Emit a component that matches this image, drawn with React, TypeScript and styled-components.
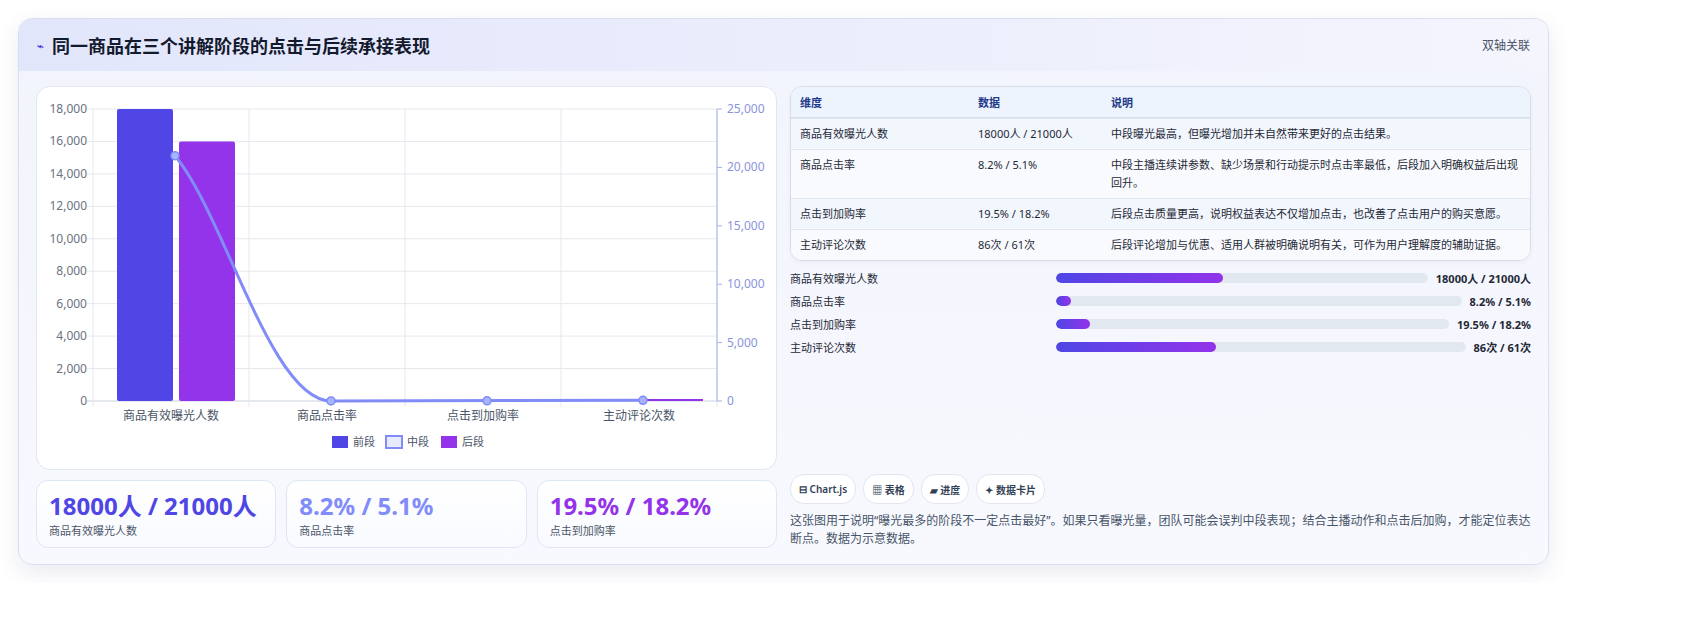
import React from "react";
import styled, { createGlobalStyle } from "styled-components";

const Global = createGlobalStyle`
  body { margin: 0; background: #fff; font-family: "Noto Sans", "Noto Sans CJK SC", sans-serif; }
`;

const Page = styled.div`
  padding: 18px 147px 18px 18px;
`;
const Card = styled.div`
  border: 1px solid #d9def0;
  border-radius: 14px;
  background: linear-gradient(180deg, #f2f4fd 0%, #f8f9fe 100%);
  box-shadow: 0 8px 22px rgba(80, 90, 140, 0.12);
  overflow: hidden;
`;
const Header = styled.div`
  height: 52px;
  display: flex;
  align-items: center;
  justify-content: space-between;
  padding: 0 18px;
  background: linear-gradient(90deg, #e2e6fb, #eef0fc 70%, #f4f5fd);
`;
const Title = styled.h2`
  margin: 0;
  font-size: 18px;
  font-weight: 700;
  color: #141a2e;
  display: flex;
  align-items: center;
  gap: 8px;
`;
const Icon = styled.span`
  color: #4f46e5;
  font-size: 11px;
`;
const Tag = styled.span`
  font-size: 12px;
  color: #4b5567;
`;
const Body = styled.div`
  display: grid;
  grid-template-columns: 741px 741px;
  gap: 13px;
  padding: 15px 17px 16px 17px;
`;
const Col = styled.div`
  display: flex;
  flex-direction: column;
`;
const ChartCard = styled.div`
  height: 382px;
  background: #fff;
  border: 1px solid #e1e6f0;
  border-radius: 14px;
  overflow: hidden;
`;
const Stats = styled.div`
  display: grid;
  grid-template-columns: repeat(3, 1fr);
  gap: 10px;
  margin-top: 10px;
`;
const Stat = styled.div`
  height: 68px;
  box-sizing: border-box;
  border: 1px solid #dde6f3;
  border-radius: 12px;
  background: linear-gradient(180deg, #fff, #f8faff);
  padding: 9px 12px;
`;
const StatVal = styled.div<{ c: string }>`
  font-size: 24px;
  font-weight: 700;
  color: ${(p) => p.c};
  line-height: 32px;
`;
const StatLbl = styled.div`
  font-size: 11px;
  color: #4b5567;
`;
const Table = styled.table`
  width: 100%;
  border-collapse: separate;
  border-spacing: 0;
  border: 1px solid #d6dde9;
  border-radius: 12px;
  overflow: hidden;
  font-size: 11px;
  color: #1f2937;
  box-shadow: 0 2px 4px rgba(0,0,0,0.04);
`;
const Th = styled.th`
  text-align: left;
  font-weight: 600;
  color: #1e3a8a;
  background: #eef4fe;
  padding: 0 9px;
  height: 30px;
  border-bottom: 1px solid #d6dde9;
`;
const Td = styled.td<{ alt?: boolean }>`
  padding: 6px 9px;
  line-height: 18px;
  background: ${(p) => (p.alt ? "#f8fafd" : "#f2f6fd")};
  border-top: 1px solid #e1e6ef;
  vertical-align: top;
`;
const Bars = styled.div`
  display: flex;
  flex-direction: column;
  gap: 5px;
  margin-top: 8px;
`;
const BarRow = styled.div`
  display: flex;
  align-items: center;
  height: 18px;
  font-size: 11px;
  color: #1f2937;
`;
const BarLabel = styled.div`
  width: 266px;
  flex: none;
`;
const Track = styled.div`
  flex: 1;
  height: 10px;
  border-radius: 5px;
  background: #e2e8f0;
  overflow: hidden;
`;
const Fill = styled.div`
  height: 100%;
  border-radius: 5px;
  background: linear-gradient(90deg, #4f46e5, #9333ea);
`;
const BarVal = styled.div`
  margin-left: 8px;
  font-weight: 700;
`;
const Chips = styled.div`
  display: flex;
  gap: 7px;
  margin-top: auto;
`;
const Chip = styled.span`
  height: 28px;
  padding: 0 8px;
  display: inline-flex;
  align-items: center;
  gap: 3px;
  border: 1px solid #e1e6ef;
  border-radius: 14px;
  background: #fff;
  font-size: 10px;
  font-weight: 600;
  color: #334155;
`;
const Note = styled.p`
  margin: 8px 0 0;
  font-size: 12px;
  line-height: 18px;
  color: #475569;
`;

const Chart = () => {
  const L = 56, R = 680, T = 22, B = 314;
  const lY = (v: number) => B - ((B - T) * v) / 18000;
  const rY = (v: number) => B - ((B - T) * v) / 25000;
  const cw = (R - L) / 4;
  const grid = [];
  for (let v = 0; v <= 18000; v += 2000) {
    grid.push(
      <g key={v}>
        <line x1={L - 6} x2={R} y1={lY(v)} y2={lY(v)} stroke={v === 0 ? "#cbd2dd" : "#e5e8ee"} />
        <text x={L - 6} y={lY(v) + 4} textAnchor="end" fontSize="12" fill="#6b7280">{v.toLocaleString("en-US")}</text>
      </g>
    );
  }
  const rticks = [0, 5000, 10000, 15000, 20000, 25000].map((v) => (
    <g key={v}>
      <line x1={R} x2={R + 5} y1={rY(v)} y2={rY(v)} stroke="#a5b0e8" />
      <text x={R + 10} y={rY(v) + 4} fontSize="12" fill="#8a94dc">{v.toLocaleString("en-US")}</text>
    </g>
  ));
  const cats = ["商品有效曝光人数", "商品点击率", "点击到加购率", "主动评论次数"];
  const pts = [21000, 5.1, 18.2, 61].map((v, i) => [L + cw * i + cw / 2 + 4, rY(v)]);
  return (
    <svg width="741" height="382" fontFamily='"Noto Sans","Noto Sans CJK SC",sans-serif'>
      {grid}
      {[0, 1, 2, 3, 4].map((i) => (
        <line key={i} x1={L + cw * i} x2={L + cw * i} y1={T} y2={B + 6} stroke="#e5e8ee" />
      ))}
      <line x1={R} x2={R} y1={T} y2={B} stroke="#a5b0e8" />
      {rticks}
      <rect x={80} y={lY(18000)} width={56} height={B - lY(18000)} fill="#4f46e5" rx="2" />
      <rect x={142} y={lY(16000)} width={56} height={B - lY(16000)} fill="#9333ea" rx="2" />
      <rect x={L + cw * 3 + 24} y={B - 2} width={56} height={2} fill="#4f46e5" />
      <rect x={L + cw * 3 + 86} y={B - 2} width={56} height={2} fill="#9333ea" />
      <path
        d={`M${pts[0][0]},${pts[0][1]} C${pts[0][0] + 50},${pts[0][1] + 60} ${pts[1][0] - 60},${pts[1][1]} ${pts[1][0]},${pts[1][1]} L${pts[3][0]},${pts[3][1]}`}
        fill="none" stroke="#818cf8" strokeWidth="3"
      />
      {pts.map((p, i) => (
        <circle key={i} cx={p[0]} cy={p[1]} r="4" fill="#a5b4fc" stroke="#818cf8" strokeWidth="1.5" />
      ))}
      {cats.map((c, i) => (
        <text key={c} x={L + cw * i + cw / 2} y={333} textAnchor="middle" fontSize="12" fill="#4b5567">{c}</text>
      ))}
      <rect x={295} y={349} width={16} height={12} fill="#4f46e5" />
      <text x={316} y={359} fontSize="11" fill="#4b5567">前段</text>
      <rect x={349} y={349} width={16} height={12} fill="#e8ebfd" stroke="#818cf8" strokeWidth="2" />
      <text x={370} y={359} fontSize="11" fill="#4b5567">中段</text>
      <rect x={404} y={349} width={16} height={12} fill="#9333ea" />
      <text x={425} y={359} fontSize="11" fill="#4b5567">后段</text>
    </svg>
  );
};

const rows = [
  ["商品有效曝光人数", "18000人 / 21000人", "中段曝光最高，但曝光增加并未自然带来更好的点击结果。"],
  ["商品点击率", "8.2% / 5.1%", "中段主播连续讲参数、缺少场景和行动提示时点击率最低，后段加入明确权益后出现回升。"],
  ["点击到加购率", "19.5% / 18.2%", "后段点击质量更高，说明权益表达不仅增加点击，也改善了点击用户的购买意愿。"],
  ["主动评论次数", "86次 / 61次", "后段评论增加与优惠、适用人群被明确说明有关，可作为用户理解度的辅助证据。"],
];
const bars: [string, number, string][] = [
  ["商品有效曝光人数", 45, "18000人 / 21000人"],
  ["商品点击率", 3.7, "8.2% / 5.1%"],
  ["点击到加购率", 8.6, "19.5% / 18.2%"],
  ["主动评论次数", 39, "86次 / 61次"],
];

export default function App() {
  return (
    <Page>
      <Global />
      <Card>
        <Header>
          <Title><Icon>⌁</Icon>同一商品在三个讲解阶段的点击与后续承接表现</Title>
          <Tag>双轴关联</Tag>
        </Header>
        <Body>
          <Col>
            <ChartCard><Chart /></ChartCard>
            <Stats>
              <Stat><StatVal c="#4f46e5">18000人 / 21000人</StatVal><StatLbl>商品有效曝光人数</StatLbl></Stat>
              <Stat><StatVal c="#818cf8">8.2% / 5.1%</StatVal><StatLbl>商品点击率</StatLbl></Stat>
              <Stat><StatVal c="#9333ea">19.5% / 18.2%</StatVal><StatLbl>点击到加购率</StatLbl></Stat>
            </Stats>
          </Col>
          <Col>
            <Table>
              <thead>
                <tr><Th style={{ width: 160 }}>维度</Th><Th style={{ width: 115 }}>数据</Th><Th>说明</Th></tr>
              </thead>
              <tbody>
                {rows.map((r, i) => (
                  <tr key={r[0]}>
                    {r.map((c, j) => <Td key={j} alt={i % 2 === 1}>{c}</Td>)}
                  </tr>
                ))}
              </tbody>
            </Table>
            <Bars>
              {bars.map(([l, p, v]) => (
                <BarRow key={l}>
                  <BarLabel>{l}</BarLabel>
                  <Track><Fill style={{ width: `${p}%` }} /></Track>
                  <BarVal>{v}</BarVal>
                </BarRow>
              ))}
            </Bars>
            <Chips>
              <Chip>⊟ Chart.js</Chip>
              <Chip>▦ 表格</Chip>
              <Chip>▰ 进度</Chip>
              <Chip>✦ 数据卡片</Chip>
            </Chips>
            <Note>这张图用于说明“曝光最多的阶段不一定点击最好”。如果只看曝光量，团队可能会误判中段表现；结合主播动作和点击后加购，才能定位表达断点。数据为示意数据。</Note>
          </Col>
        </Body>
      </Card>
    </Page>
  );
}
